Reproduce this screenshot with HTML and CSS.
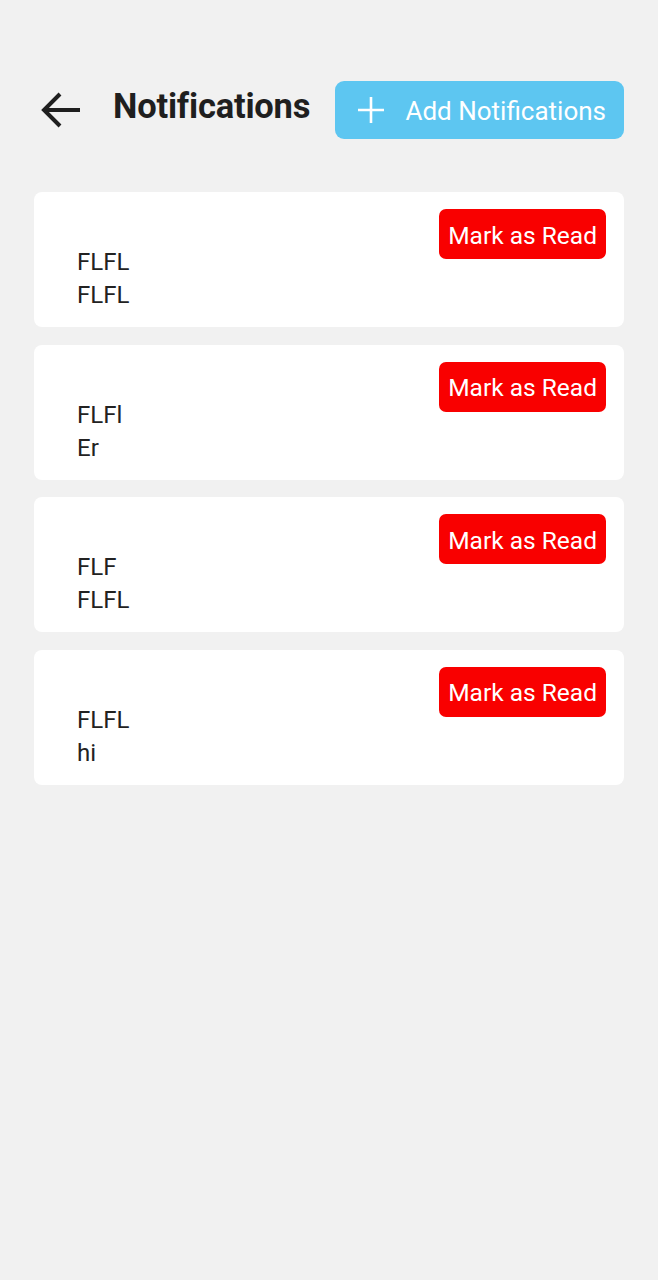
FILE: index.html
```html
<!DOCTYPE html>
<html lang="en">
<head>
  <meta charset="utf-8" />
  <meta name="viewport" content="width=device-width, initial-scale=1" />
  <title>Notifications</title>
  <link rel="stylesheet" href="styles.css">
</head>
<body>
  <!-- header: back, title, add button -->
  <header class="top-bar">
    <button class="back-btn" aria-label="Back">
      <svg width="40" height="38" viewBox="0 0 40 38">
        <path d="M39 19H4M19 3L3 19L19 35" fill="none" stroke="#1f1f1f" stroke-width="4" stroke-linecap="butt" stroke-linejoin="miter"/>
      </svg>
    </button>
    <h1 class="title">Notifications</h1>
    <button class="add-btn">
      <svg width="28" height="28" viewBox="0 0 28 28">
        <path d="M14 1V27M1 14H27" stroke="#fff" stroke-width="2.6" fill="none"/>
      </svg>
      <span>Add Notifications</span>
    </button>
  </header>

  <!-- list of notifications -->
  <main class="list">
    <div class="card">
      <div class="card-text"><div>FLFL</div><div>FLFL</div></div>
      <button class="read-btn">Mark as Read</button>
    </div>
    <div class="card">
      <div class="card-text"><div>FLFl</div><div>Er</div></div>
      <button class="read-btn">Mark as Read</button>
    </div>
    <div class="card">
      <div class="card-text"><div>FLF</div><div>FLFL</div></div>
      <button class="read-btn">Mark as Read</button>
    </div>
    <div class="card">
      <div class="card-text"><div>FLFL</div><div>hi</div></div>
      <button class="read-btn">Mark as Read</button>
    </div>
  </main>
</body>
</html>
```

FILE: styles.css
```css
body {
  margin: 0;
  background: #f1f1f1;
  font-family: Roboto, "Noto Sans", sans-serif;
  color: #222;
}
button {
  font-family: inherit;
  border: none;
  cursor: pointer;
}
.top-bar {
  display: flex;
  align-items: center;
  padding: 81px 34px 0 41px;
  height: 58px;
}
.back-btn {
  background: none;
  padding: 0;
  display: flex;
  margin-right: 32px;
}
.title {
  margin: 0;
  font-size: 34.5px;
  font-weight: 700;
  color: #1f1f1f;
  letter-spacing: -0.2px;
  position: relative;
  top: -4px;
}
.add-btn {
  display: flex;
  align-items: center;
  gap: 20px;
  height: 58px;
  padding: 0 18px 0 22px;
  margin-left: auto;
  background: #5dc6f1;
  color: #fff;
  font-size: 26px;
  border-radius: 9px;
}
.add-btn span {
  position: relative;
  top: 1px;
}
.list {
  display: flex;
  flex-direction: column;
  gap: 17.5px;
  margin: 53px 34px 0;
}
.card {
  display: flex;
  align-items: flex-start;
  background: #fff;
  border-radius: 8px;
  padding: 17px 18px 15px 43px;
}
.card-text {
  flex: 1;
  margin-top: 37px;
  font-size: 24px;
  line-height: 33px;
}
.read-btn {
  height: 50px;
  padding: 2px 9px 0;
  background: #f90000;
  color: #fff;
  font-size: 24.5px;
  border-radius: 7px;
}
```
